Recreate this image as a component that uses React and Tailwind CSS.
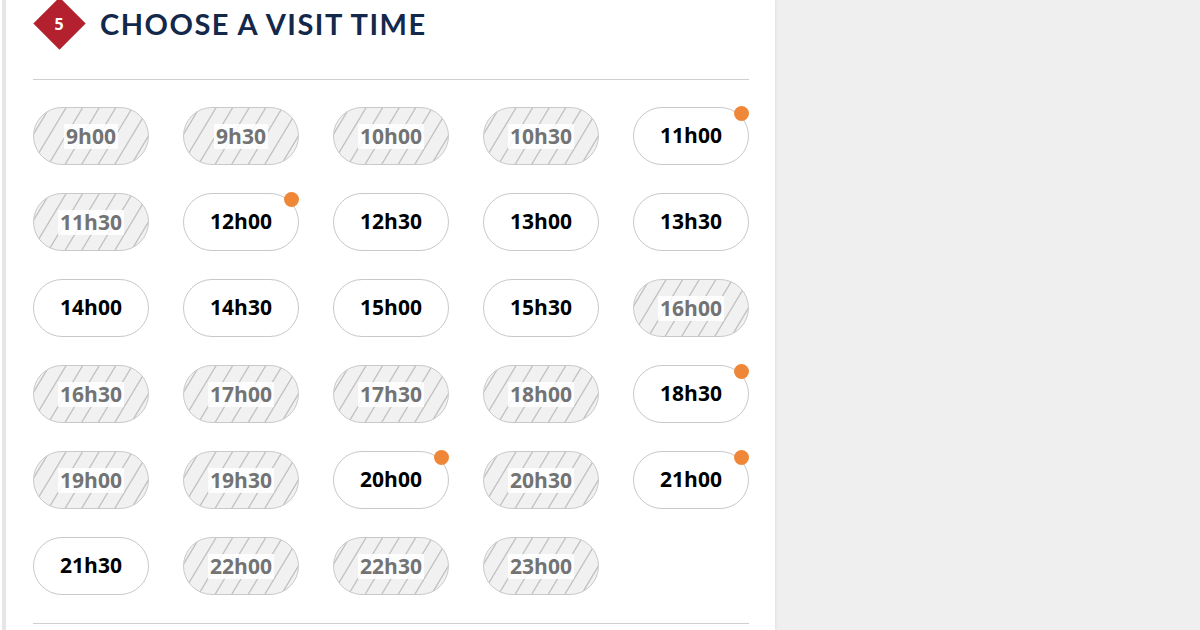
import React from "react";

const slots = [
  ["9h00", 0, 0], ["9h30", 0, 0], ["10h00", 0, 0], ["10h30", 0, 0], ["11h00", 1, 1],
  ["11h30", 0, 0], ["12h00", 1, 1], ["12h30", 1, 0], ["13h00", 1, 0], ["13h30", 1, 0],
  ["14h00", 1, 0], ["14h30", 1, 0], ["15h00", 1, 0], ["15h30", 1, 0], ["16h00", 0, 0],
  ["16h30", 0, 0], ["17h00", 0, 0], ["17h30", 0, 0], ["18h00", 0, 0], ["18h30", 1, 1],
  ["19h00", 0, 0], ["19h30", 0, 0], ["20h00", 1, 1], ["20h30", 0, 0], ["21h00", 1, 1],
  ["21h30", 1, 0], ["22h00", 0, 0], ["22h30", 0, 0], ["23h00", 0, 0],
];

function Slot({ label, available, dot }) {
  if (available) {
    return (
      <div className="relative h-[58px] rounded-[29px] border border-[#c9c9c9] bg-white flex items-center justify-center">
        <span className="text-[21px] font-bold text-black">{label}</span>
        {dot ? (
          <span className="absolute right-[-1px] top-[-2px] w-[15px] h-[15px] rounded-full bg-[#ee8838]" />
        ) : null}
      </div>
    );
  }
  return (
    <div className="relative h-[58px] rounded-[29px] border border-[#c9c9c9] bg-[repeating-linear-gradient(121deg,#f1f1f1_0px,#f1f1f1_12px,#c4c4c4_12.8px,#c4c4c4_13.4px,#f1f1f1_14.2px)] flex items-center justify-center overflow-hidden">
      <span className="text-[21px] font-bold text-[#737373] bg-white/85 px-[2px] leading-[25px]">{label}</span>
    </div>
  );
}

export default function App() {
  return (
    <div className="w-[1200px] h-[630px] overflow-hidden bg-[#efefef] flex" style={{ fontFamily: '"Open Sans", sans-serif' }}>
      <div className="w-[7px] bg-white flex justify-center">
        <div className="w-[4px] bg-[#e6e6e6]" />
      </div>
      <div className="w-[768px] bg-white px-[26px] shadow-[1px_0_3px_rgba(0,0,0,0.06)]">
        <div className="flex items-center h-[46px]">
          <div className="w-[53px] h-[53px] flex items-center justify-center">
            <div className="w-[37px] h-[37px] bg-[#b3202e] rotate-45 flex items-center justify-center">
              <span className="-rotate-45 text-white text-[16px] font-bold">5</span>
            </div>
          </div>
          <h1
            className="ml-[14px] text-[#13284a] text-[29px] font-bold tracking-[1.5px] uppercase leading-none"
            style={{ fontFamily: '"Lato", sans-serif' }}
          >
            Choose a visit time
          </h1>
        </div>
        <div className="mt-[33px] h-px bg-[#cfcfcf]" />
        <div className="mt-[27px] grid grid-cols-5 gap-x-[34px] gap-y-[28px]">
          {slots.map(([l, a, d]) => (
            <Slot key={l} label={l} available={a} dot={d} />
          ))}
        </div>
        <div className="mt-[28px] h-px bg-[#cfcfcf]" />
      </div>
    </div>
  );
}
